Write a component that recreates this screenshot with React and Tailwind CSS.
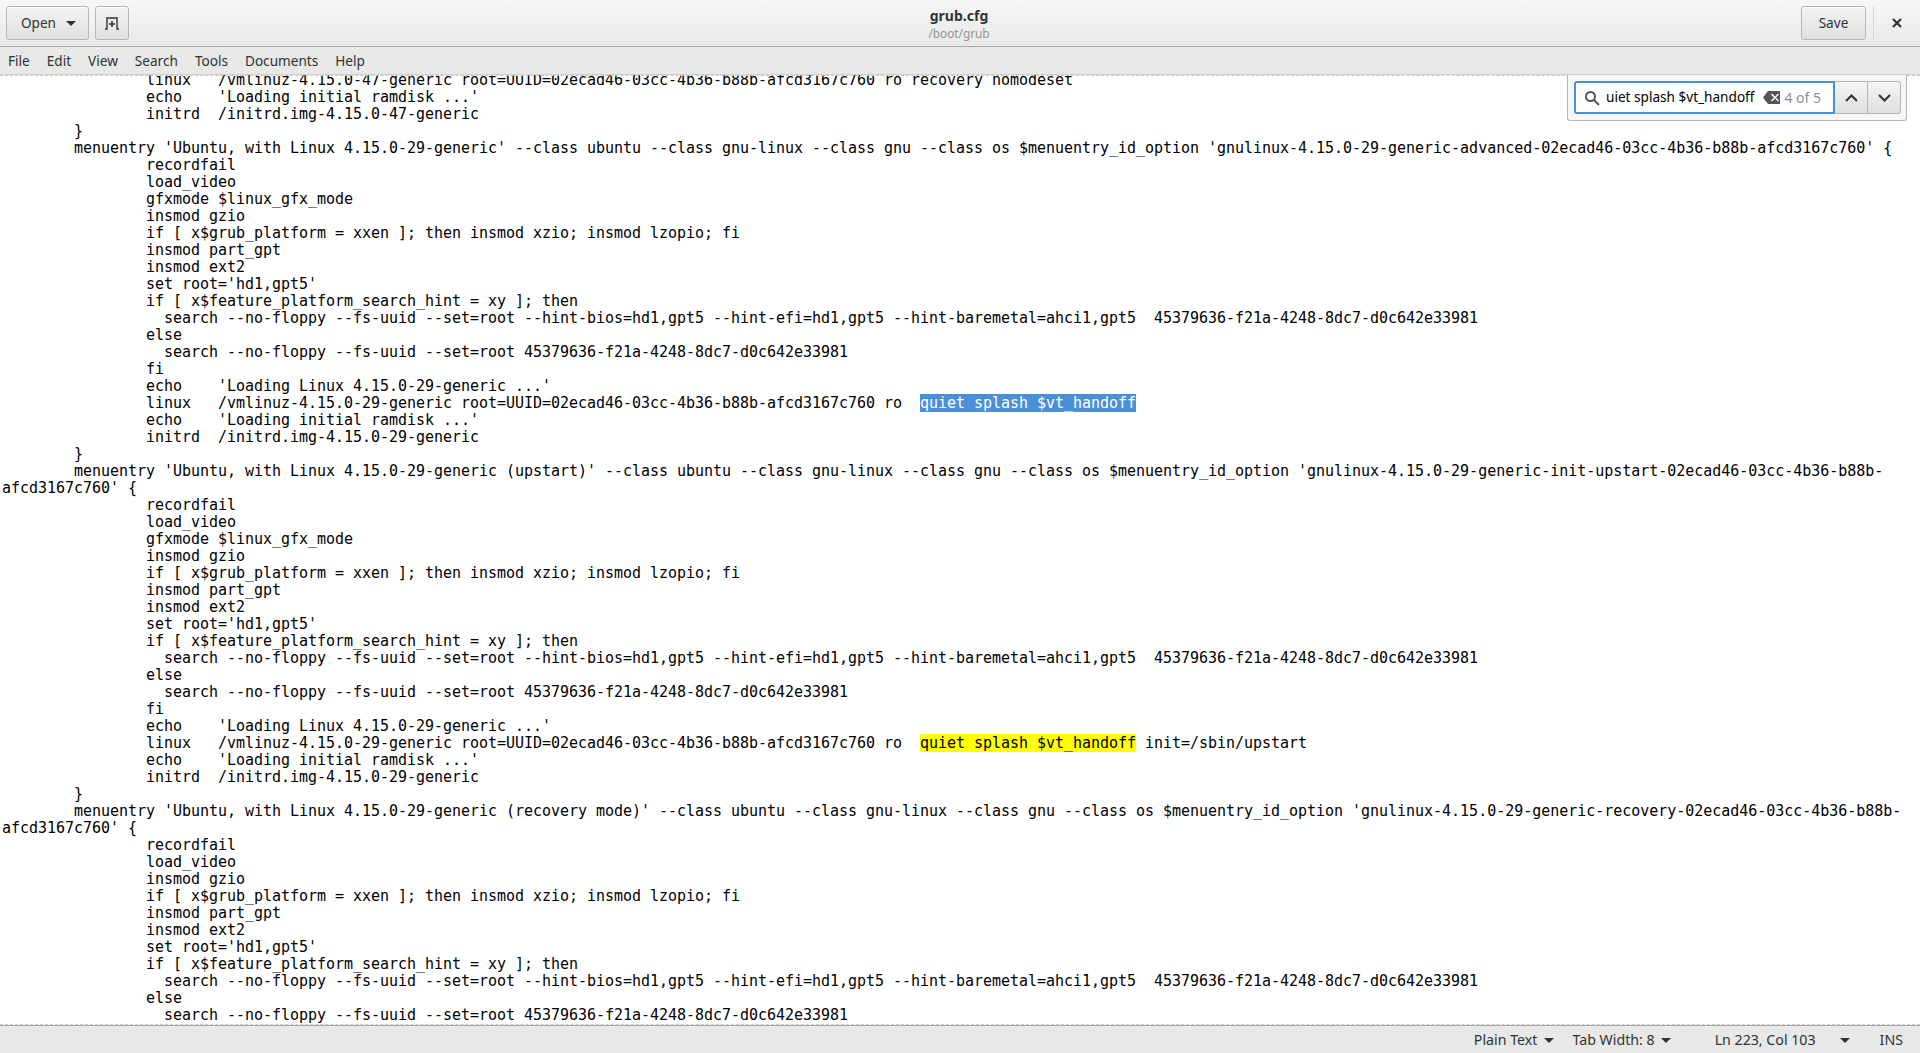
import React from "react";

const indent = "                ";
const tab = "        ";

function Hl({ kind, children }) {
  const cls = kind === "sel" ? "bg-[#4a90d9] text-white" : "bg-[#ffff00]";
  return <span className={cls}>{children}</span>;
}

const linuxHead = "/vmlinuz-4.15.0-29-generic root=UUID=02ecad46-03cc-4b36-b88b-afcd3167c760 ro  ";
const commonHead = [
  "if [ x$grub_platform = xxen ]; then insmod xzio; insmod lzopio; fi",
  "insmod part_gpt",
  "insmod ext2",
  "set root='hd1,gpt5'",
  "if [ x$feature_platform_search_hint = xy ]; then",
  "  search --no-floppy --fs-uuid --set=root --hint-bios=hd1,gpt5 --hint-efi=hd1,gpt5 --hint-baremetal=ahci1,gpt5  45379636-f21a-4248-8dc7-d0c642e33981",
  "else",
  "  search --no-floppy --fs-uuid --set=root 45379636-f21a-4248-8dc7-d0c642e33981",
];
const gfx = ["recordfail", "load_video", "gfxmode $linux_gfx_mode", "insmod gzio"];
const tail = ["fi", "echo    'Loading Linux 4.15.0-29-generic ...'"];
const tail2 = ["echo    'Loading initial ramdisk ...'", "initrd  /initrd.img-4.15.0-29-generic"];
const i = (arr) => arr.map((s) => indent + s);

const lines = [
  indent + "linux   /vmlinuz-4.15.0-47-generic root=UUID=02ecad46-03cc-4b36-b88b-afcd3167c760 ro recovery nomodeset",
  indent + "echo    'Loading initial ramdisk ...'",
  indent + "initrd  /initrd.img-4.15.0-47-generic",
  tab + "}",
  tab + "menuentry 'Ubuntu, with Linux 4.15.0-29-generic' --class ubuntu --class gnu-linux --class gnu --class os $menuentry_id_option 'gnulinux-4.15.0-29-generic-advanced-02ecad46-03cc-4b36-b88b-afcd3167c760' {",
  ...i(gfx),
  ...i(commonHead),
  ...i(tail),
  <>{indent + "linux   " + linuxHead}<Hl kind="sel">quiet splash $vt_handoff</Hl></>,
  ...i(tail2),
  tab + "}",
  tab + "menuentry 'Ubuntu, with Linux 4.15.0-29-generic (upstart)' --class ubuntu --class gnu-linux --class gnu --class os $menuentry_id_option 'gnulinux-4.15.0-29-generic-init-upstart-02ecad46-03cc-4b36-b88b-",
  "afcd3167c760' {",
  ...i(gfx),
  ...i(commonHead),
  ...i(tail),
  <>{indent + "linux   " + linuxHead}<Hl kind="match">quiet splash $vt_handoff</Hl> init=/sbin/upstart</>,
  ...i(tail2),
  tab + "}",
  tab + "menuentry 'Ubuntu, with Linux 4.15.0-29-generic (recovery mode)' --class ubuntu --class gnu-linux --class gnu --class os $menuentry_id_option 'gnulinux-4.15.0-29-generic-recovery-02ecad46-03cc-4b36-b88b-",
  "afcd3167c760' {",
  ...i(["recordfail", "load_video", "insmod gzio"]),
  ...i(commonHead),
];

const Caret = ({ className = "" }) => (
  <svg width="10" height="5" viewBox="0 0 10 5" className={className}>
    <path d="M0 0h10L5 5z" fill="#2e3436" />
  </svg>
);

const btn = "flex items-center justify-center h-[34px] rounded-[3px] border border-[#b6b6b3] bg-gradient-to-b from-[#f4f4f3] to-[#dfdfde] shadow-[inset_0_1px_0_#fff] text-[#2e3436]";

export default function App() {
  return (
    <div className="h-[1053px] w-[1920px] overflow-hidden flex flex-col bg-white text-[#2e3436] font-['Noto_Sans',sans-serif] text-[13.6px]">
      <header className="h-[47px] shrink-0 grid grid-cols-[1fr_auto_1fr] items-center pl-[6px] bg-gradient-to-b from-[#f7f7f6] to-[#e8e8e7] border-b border-[#a8a8a6]">
        <div className="flex items-center">
          <button className={`${btn} w-[83px] gap-[10px] pl-[2px]`}>
            <span>Open</span>
            <Caret />
          </button>
          <button className={`${btn} w-[34px] ml-[6px]`}>
            <svg width="16" height="14" viewBox="0 0 16 14" fill="none" stroke="#2e3436" strokeWidth="1.6">
              <path d="M1 13h2V2h10v11h2" strokeWidth="1.4" />
              <path d="M8 5v6M5 8h6" />
            </svg>
          </button>
        </div>
        <div className="flex flex-col items-center mr-[8px] pt-[2px]">
          <div className="font-bold text-[14px] leading-[18px] mt-[-1px]">grub.cfg</div>
          <div className="text-[11.8px] leading-[16px] text-[#929595]">/boot/grub</div>
        </div>
        <div className="flex items-center justify-end">
          <button className={`${btn} w-[65px]`}>Save</button>
          <div className="w-px h-[34px] bg-[#d5d5d4] ml-[7px]" />
          <button className="w-[46px] h-[33px] flex items-center justify-center">
            <svg width="10" height="10" viewBox="0 0 10 10" stroke="#2e3436" strokeWidth="2.2">
              <path d="M1 1l8 8M9 1l-8 8" />
            </svg>
          </button>
        </div>
      </header>

      <nav className="h-[28px] shrink-0 flex items-center gap-[17px] pl-[8px] pt-[2px] bg-[#e8e8e7] border-b border-[#d0d0ce]">
        {["File", "Edit", "View", "Search", "Tools", "Documents", "Help"].map((m) => (
          <span key={m}>{m}</span>
        ))}
      </nav>

      <main className="relative flex-1 min-h-0 overflow-hidden bg-white">
        <div className="mt-[-3px] pl-[2px] font-['DejaVu_Sans_Mono',monospace] text-[15px] leading-[17px] tracking-[-0.03px] text-black whitespace-pre">
          {lines.map((l, n) => (
            <div key={n} className="h-[17px]">{l}</div>
          ))}
        </div>
        <div className="absolute top-0 left-0 right-0 h-px border-t border-dashed border-[#c8c8c8]" />
        <div className="absolute bottom-0 left-0 right-0 h-px border-t border-dashed border-[#c8c8c8]" />

        <div className="absolute top-0 right-[13px] w-[340px] h-[46px] flex items-start pt-[6px] pl-[6px] bg-[#f6f6f5] border border-t-0 border-[#b6b6b3] rounded-b-[3px]">
          <div className="w-[261px] h-[33px] flex items-center bg-white border-2 border-[#4a90d9] rounded-l-[3px] pl-[8px]">
            <svg width="16" height="16" viewBox="0 0 16 16" fill="none" stroke="#555" strokeWidth="2" className="shrink-0">
              <circle cx="6.5" cy="6.5" r="4.5" />
              <path d="M10 10l5 5" />
            </svg>
            <span className="ml-[6px] text-black whitespace-nowrap">uiet splash $vt_handoff</span>
            <svg width="17" height="13" viewBox="0 0 17 13" className="ml-[9px] shrink-0">
              <path fillRule="evenodd" d="M5 0h12v13H5L0 6.5zM8 3.5l3 3-3 3 1 1 3-3 3 3 1-1-3-3 3-3-1-1-3 3-3-3z" fill="#555" />
            </svg>
            <span className="ml-[4px] text-[14px] text-[#8c8f8f] whitespace-nowrap">4 of 5</span>
          </div>
          <button className="w-[33px] h-[33px] flex items-center justify-center border border-l-0 border-[#b6b6b3] bg-gradient-to-b from-[#f4f4f3] to-[#dfdfde]">
            <svg width="13" height="8" viewBox="0 0 13 8" fill="none" stroke="#2e3436" strokeWidth="2"><path d="M1 7l5.5-5.5L12 7" /></svg>
          </button>
          <button className="w-[33px] h-[33px] flex items-center justify-center border border-l-0 border-[#b6b6b3] rounded-r-[3px] bg-gradient-to-b from-[#f4f4f3] to-[#dfdfde]">
            <svg width="13" height="8" viewBox="0 0 13 8" fill="none" stroke="#2e3436" strokeWidth="2"><path d="M1 1l5.5 5.5L12 1" /></svg>
          </button>
        </div>
      </main>

      <footer className="h-[28px] shrink-0 flex items-center bg-[#e8e8e7] border-t border-[#a8a8a6] pr-[17px] pt-[1px] justify-end text-[14.2px]">
        <span>Plain Text</span>
        <Caret className="ml-[7px]" />
        <span className="ml-[18px]">Tab Width: 8</span>
        <Caret className="ml-[6px]" />
        <span className="ml-[44px]">Ln 223, Col 103</span>
        <Caret className="ml-[24px]" />
        <span className="ml-[30px]">INS</span>
      </footer>
    </div>
  );
}
